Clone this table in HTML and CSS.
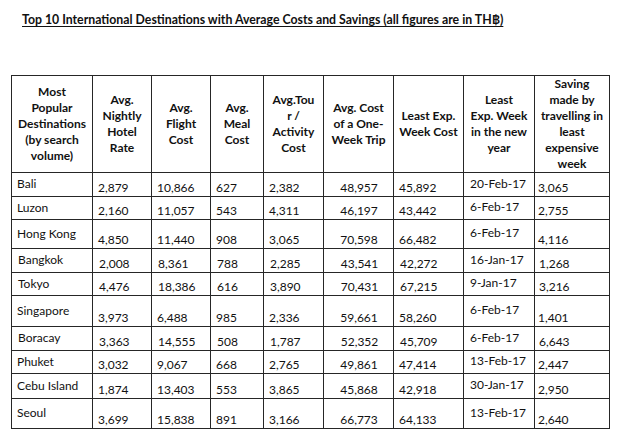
FILE: index.html
```html
<!DOCTYPE html>
<html>
<head>
<meta charset="utf-8">
<link rel="stylesheet" href="styles.css">
</head>
<body>
<div class="page">
  <h1 class="title">Top 10 International Destinations with Average Costs and Savings (all figures are in TH฿)</h1>
  <table class="costs">
    <colgroup>
      <col class="c1"><col class="c2"><col class="c3"><col class="c4"><col class="c5"><col class="c6"><col class="c7"><col class="c8"><col class="c9">
    </colgroup>
    <thead>
      <tr class="head">
        <th>Most<br>Popular<br>Destinations<br>(by search<br>volume)</th>
        <th>Avg.<br>Nightly<br>Hotel<br>Rate</th>
        <th>Avg.<br>Flight<br>Cost</th>
        <th>Avg.<br>Meal<br>Cost</th>
        <th>Avg.Tou<br>r /<br>Activity<br>Cost</th>
        <th>Avg. Cost<br>of a One-<br>Week Trip</th>
        <th>Least Exp.<br>Week Cost</th>
        <th>Least<br>Exp. Week<br>in the new<br>year</th>
        <th>Saving<br>made by<br>travelling in<br>least<br>expensive<br>week</th>
      </tr>
    </thead>
    <tbody>
      <tr class="r24"><td class="name">Bali</td><td>2,879</td><td>10,866</td><td>627</td><td>2,382</td><td class="mid">48,957</td><td>45,892</td><td class="date">20-Feb-17</td><td class="save">3,065</td></tr>
      <tr class="r23"><td class="name">Luzon</td><td>2,160</td><td>11,057</td><td>543</td><td>4,311</td><td class="mid">46,197</td><td>43,442</td><td class="date">6-Feb-17</td><td class="save">2,755</td></tr>
      <tr class="r29"><td class="name">Hong Kong</td><td>4,850</td><td>11,440</td><td>908</td><td>3,065</td><td class="mid">70,598</td><td>66,482</td><td class="date">6-Feb-17</td><td class="save">4,116</td></tr>
      <tr class="r24 shift"><td class="name">Bangkok</td><td>2,008</td><td>8,361</td><td>788</td><td>2,285</td><td class="mid">43,541</td><td>42,272</td><td class="date">16-Jan-17</td><td class="save">1,268</td></tr>
      <tr class="r23 shift"><td class="name">Tokyo</td><td>4,476</td><td>18,386</td><td>616</td><td>3,890</td><td class="mid">70,431</td><td>67,215</td><td class="date">9-Jan-17</td><td class="save">3,216</td></tr>
      <tr class="r31"><td class="name">Singapore</td><td>3,973</td><td>6,488</td><td>985</td><td>2,336</td><td class="mid">59,661</td><td>58,260</td><td class="date">6-Feb-17</td><td class="save">1,401</td></tr>
      <tr class="r24 shift"><td class="name">Boracay</td><td>3,363</td><td>14,555</td><td>508</td><td>1,787</td><td class="mid">52,352</td><td>45,709</td><td class="date">6-Feb-17</td><td class="save">6,643</td></tr>
      <tr class="r23"><td class="name">Phuket</td><td>3,032</td><td>9,067</td><td>668</td><td>2,765</td><td class="mid">49,861</td><td>47,414</td><td class="date">13-Feb-17</td><td class="save">2,447</td></tr>
      <tr class="r25"><td class="name">Cebu Island</td><td>1,874</td><td>13,403</td><td>553</td><td>3,865</td><td class="mid">45,868</td><td>42,918</td><td class="date">30-Jan-17</td><td class="save">2,950</td></tr>
      <tr class="r30"><td class="name">Seoul</td><td>3,699</td><td>15,838</td><td>891</td><td>3,166</td><td class="mid">66,773</td><td>64,133</td><td class="date">13-Feb-17</td><td class="save">2,640</td></tr>
    </tbody>
  </table>
</div>
</body>
</html>
```
FILE: styles.css
```css
html, body {
  margin: 0;
  padding: 0;
  background: #ffffff;
}

.page {
  padding: 13px 0 0 11px;
  font-family: Lato, "Open Sans", sans-serif;
  color: #111;
}

.title {
  margin: 0 0 0 11px;
  font-size: 12.3px;
  font-weight: 700;
  line-height: 14px;
  text-decoration: underline;
  text-underline-offset: 2px;
  color: #111;
}

.costs {
  margin-top: 48px;
  border-collapse: collapse;
  table-layout: fixed;
  width: 598px;
  font-size: 12px;
}

.c1 { width: 81px; }
.c2 { width: 59px; }
.c3 { width: 59px; }
.c4 { width: 53px; }
.c5 { width: 60px; }
.c6 { width: 70px; }
.c7 { width: 70px; }
.c8 { width: 71px; }
.c9 { width: 75px; }

.costs th,
.costs td {
  border: 1px solid #262626;
  padding: 0 4px 1px 5px;
  overflow: hidden;
  white-space: nowrap;
}

.head {
  height: 97px;
}

.head th {
  padding: 0 2px;
  font-weight: 700;
  line-height: 16px;
  text-align: center;
  vertical-align: middle;
}

.costs td {
  line-height: 15px;
  text-align: left;
  vertical-align: bottom;
}

.costs td.name {
  vertical-align: middle;
  padding-bottom: 2px;
}

.costs td.mid {
  text-align: center;
}

.costs td.date {
  vertical-align: middle;
  padding-bottom: 3px;
  padding-left: 6px;
}

.costs td.save {
  padding-left: 3px;
}

.shift td {
  padding-left: 6px;
}

.shift td.save {
  padding-left: 4px;
}

.r23 { height: 23px; }
.r24 { height: 24px; }
.r25 { height: 25px; }
.r29 { height: 29px; }
.r30 { height: 30px; }
.r31 { height: 31px; }
```
